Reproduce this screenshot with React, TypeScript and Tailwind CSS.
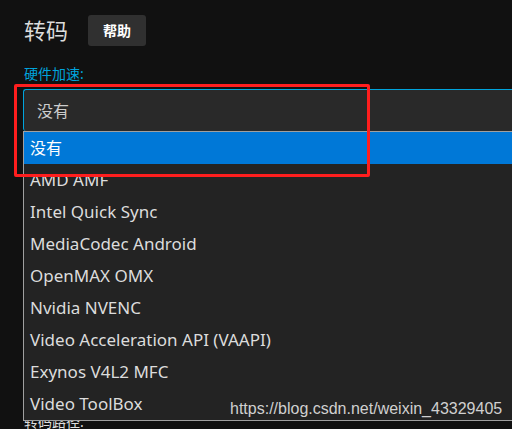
import React from "react";

const items = [
  "AMD AMF",
  "Intel Quick Sync",
  "MediaCodec Android",
  "OpenMAX OMX",
  "Nvidia NVENC",
  "Video Acceleration API (VAAPI)",
  "Exynos V4L2 MFC",
  "Video ToolBox",
];

const cjk = { fontFamily: '"Noto Sans", "Noto Sans CJK SC", sans-serif' };

export default function App() {
  return (
    <div
      className="relative w-[512px] h-[429px] overflow-hidden bg-[#111111] text-[#dddddd]"
      style={cjk}
    >
      <div className="pl-6 pt-[14px] flex items-center gap-5">
        <h1 className="text-[22px] leading-[32px] text-[#dcdcdc] font-normal">转码</h1>
        <button className="h-[31px] px-[15px] rounded-[3px] bg-[#303030] text-[14px] font-bold text-white">
          帮助
        </button>
      </div>

      <div className="pl-6 mt-[18px] text-[14px] leading-[20px] text-[#00a4dc]">硬件加速:</div>

      <div className="relative ml-[23px] mt-[5px] w-[560px]">
        <div className="h-[42px] flex items-center pl-[13px] bg-[#292929] border-t border-l border-[#00a4dc] rounded-tl-[3px] rounded-bl-[3px] text-[16px] text-[#cccccc]">
          没有
        </div>
        <div className="absolute left-0 top-[42px] w-full z-10 bg-[#232323] border border-[#a0a0a0]">
          <div className="h-8 flex items-center pl-[6px] bg-[#0078d7] text-white text-[16px]">没有</div>
          {items.map((t) => (
            <div key={t} className="h-8 flex items-center pl-[6px] text-[17px] text-[#dcdcdc]">
              {t}
            </div>
          ))}
        </div>
      </div>

      <div className="pl-6 mt-[281px] text-[14px] leading-[20px] text-[#dddddd]">转码路径:</div>

      <div className="absolute left-[14px] top-[84px] w-[356px] h-[93px] border-[3px] border-[#ff1e1e] rounded-[2px] z-20" />

      <div
        className="absolute left-[230px] top-[400px] z-30 text-[16px] leading-[18px] text-[#d0d0d0]"
        style={{ fontFamily: '"Liberation Sans", Arial, sans-serif' }}
      >
        https://blog.csdn.net/weixin_43329405
      </div>
    </div>
  );
}
